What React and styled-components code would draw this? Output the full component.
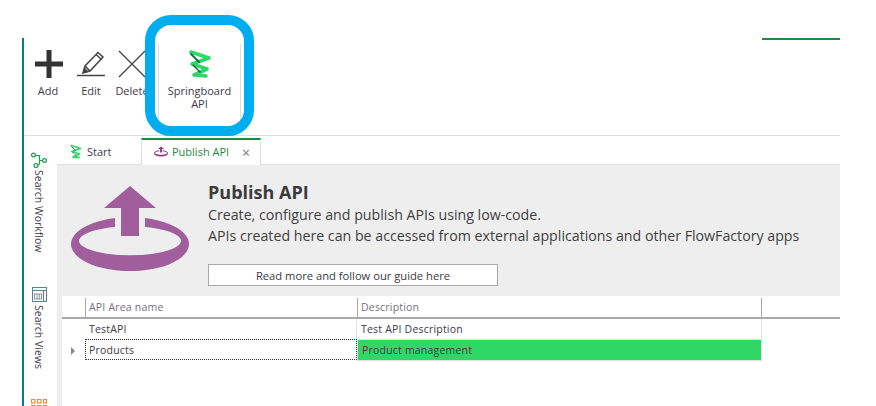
import styled, { createGlobalStyle } from "styled-components";

const GlobalStyle = createGlobalStyle`
  html, body { margin: 0; padding: 0; background: #fff; overflow: hidden; }
  body { font-family: "Open Sans", "Noto Sans", sans-serif; color: #3b3b3b; }
`;

const SpringIcon = ({ size = 24 }) => (
  <svg width={size} height={size * 1.25} viewBox="0 0 24 30" fill="none" strokeLinecap="round" strokeLinejoin="round">
    <path d="M3 3 L21 9 L4 15 L19 20 L6 26 L18 27" stroke="#2fd866" strokeWidth="3.6" />
    <path d="M3 5 L11 13" stroke="#136b37" strokeWidth="1.800" />
    <path d="M5 16 L12 23" stroke="#136b37" strokeWidth="1.400" />
  </svg>
);

const PublishIcon = ({ width = 118, height = 85, color = "#a05f9c" }) => (
  <svg width={width} height={height} viewBox="0 0 118 85">
    <path fill={color} d="M59 0 L85 22 L68 22 L68 50 L50 50 L50 22 L33 22 Z" />
    <path fill={color} d="M44 32 A59 27 0 1 0 74 32 L74 41 A51 14.500 0 1 1 44 41 Z" />
  </svg>
);

const AddIcon = () => (
  <svg width="30" height="30" viewBox="-1 0 30 30">
    <path d="M12.500 1h5v11.500H29v5H17.500V29h-5V17.500H1v-5h11.500z" fill="#333" />
  </svg>
);

const EditIcon = () => (
  <svg width="30" height="30" viewBox="0 0 30 30" fill="none" stroke="#444">
    <path d="M1 26.500h28" strokeWidth="1.500" />
    <path d="M7 24 L9 17 L22 3.500 L27 8 L14 22 Z M9 17 L14 22 M20 5.500 L25 10" strokeWidth="1.500" />
    <path d="M7 24 L8.500 19 L12 22.500 Z" fill="#444" />
  </svg>
);

const DeleteIcon = () => (
  <svg width="30" height="30" viewBox="0 0 30 30" stroke="#444" strokeWidth="1.300">
    <path d="M2 2 L28 28 M28 2 L2 28" />
  </svg>
);

const WorkflowIcon = () => (
  <svg width="16" height="16" viewBox="0 0 16 16" fill="none" stroke="#1f9a4a" strokeWidth="1.200">
    <circle cx="2.500" cy="3" r="1.900" />
    <circle cx="13.500" cy="8.500" r="1.900" />
    <circle cx="5" cy="13.500" r="1.900" />
    <path d="M4.400 3.500 L8.500 3.500 L8.500 8.500 L11.600 8.500 M8.500 8.500 L8.500 12 L6.800 13" />
  </svg>
);

const ViewsIcon = () => (
  <svg width="15" height="15" viewBox="0 0 15 15" fill="none" stroke="#5c8196">
    <rect x=".5" y=".5" width="14" height="14" />
    <path d="M.5 3.500h14M11.500 3.500v11" />
    <rect x="2.500" y="7" width="7" height="5" strokeWidth=".8" />
    <path d="M5 7v5M7.300 7v5" strokeWidth=".8" />
  </svg>
);

const GridIcon = () => (
  <svg width="16" height="16" viewBox="0 0 16 16" fill="none" stroke="#f08c1a" strokeWidth="1.100">
    <rect x=".5" y=".5" width="3.500" height="3.500" />
    <rect x="6.500" y=".5" width="3.500" height="3.500" />
    <rect x="12.500" y=".5" width="3" height="3.500" />
    <rect x=".5" y="6.500" width="3.500" height="3.500" />
    <rect x="6.500" y="6.500" width="3.500" height="3.500" />
    <rect x="12.500" y="6.500" width="3" height="3.500" />
  </svg>
);

const Page = styled.div`
  position: relative;
  width: 876px;
  height: 406px;
  padding: 38px 36px 0 22px;
  box-sizing: border-box;
  overflow: hidden;
`;

const Frame = styled.div`
  position: relative;
  height: 100%;
  border-left: 2px solid #0a7a94;
  display: flex;
  flex-direction: column;
`;

const TopLine = styled.div`
  position: absolute;
  top: 0;
  right: 0;
  width: 78px;
  height: 2px;
  background: #1d8a42;
`;

const Ribbon = styled.div`
  height: 98px;
  flex: none;
  display: flex;
  padding-top: 6px;
  box-sizing: border-box;
  border-bottom: 1px solid #dedede;
`;

const RibbonButton = styled.div`
  width: ${(p) => p.$width}px;
  height: 81px;
  flex: none;
  margin-right: ${(p) => p.$after || 0}px;
  display: flex;
  flex-direction: column;
  align-items: center;
  padding-top: 5px;
  box-sizing: border-box;
  font-size: 11px;
  line-height: 13px;
  text-align: center;
  color: #3d3a45;
  border-left: ${(p) => (p.$divided ? "1px solid #dcdcdc" : "none")};
  border-right: ${(p) => (p.$divided ? "1px solid #dcdcdc" : "none")};
`;

const RibbonIcon = styled.div`
  height: 30px;
  display: flex;
  align-items: center;
  margin-bottom: 5px;
`;

const Main = styled.div`
  flex: 1;
  min-height: 0;
  display: flex;
`;

const Side = styled.div`
  width: 33px;
  flex: none;
  display: flex;
  flex-direction: column;
  align-items: center;
  padding: 16px 3px 0 0;
  box-sizing: border-box;
`;

const SideItem = styled.div`
  height: ${(p) => p.$height}px;
  flex: none;
  display: flex;
  flex-direction: column;
  align-items: center;
`;

const SideText = styled.span`
  writing-mode: vertical-rl;
  font-size: 10.500px;
  line-height: 14px;
  margin: ${(p) => p.$gap}px 1px 0 0;
  color: #3d3a45;
`;

const Content = styled.div`
  flex: 1;
  min-width: 0;
  display: flex;
  flex-direction: column;
`;

const Tabs = styled.div`
  height: 29px;
  flex: none;
  display: flex;
  align-items: flex-end;
  border-bottom: 1px solid #dedede;
  box-sizing: border-box;
`;

const StartTab = styled.div`
  width: 84px;
  height: 26px;
  display: flex;
  align-items: center;
  gap: 5px;
  padding-left: 13px;
  box-sizing: border-box;
  font-size: 11px;
  color: #3d3a45;
`;

const ActiveTab = styled.div`
  width: 120px;
  height: 27px;
  margin-bottom: -1px;
  display: flex;
  align-items: center;
  padding: 0 10px 2px 12px;
  box-sizing: border-box;
  background: #fff;
  border-top: 2px solid #1d8a42;
  border-left: 1px solid #dedede;
  border-right: 1px solid #dedede;
  font-size: 11px;
  color: #1d8a42;
`;

const TabLabel = styled.span`
  margin-left: 4px;
  flex: 1;
`;

const CloseMark = styled.span`
  margin-top: 2px;
  font-size: 14px;
  color: #777;
  line-height: 1;
`;

const Panel = styled.div`
  flex: 1;
  min-height: 0;
  background: #eee;
  padding-left: 5px;
  display: flex;
  flex-direction: column;
`;

const Hero = styled.div`
  height: 131px;
  flex: none;
  display: flex;
  padding: 21px 0 0 9px;
  box-sizing: border-box;
`;

const HeroText = styled.div`
  margin-left: 19px;
  margin-top: -6px;
  display: flex;
  flex-direction: column;
`;

const HeroTitle = styled.h1`
  margin: 0;
  font-size: 18px;
  line-height: 24px;
  font-weight: 700;
  color: #3b3b3b;
`;

const HeroLine = styled.p`
  margin: 0;
  font-size: 14.200px;
  line-height: 21px;
  white-space: nowrap;
  color: #3f3f3f;
`;

const GuideButton = styled.button`
  margin-top: 18px;
  width: 290px;
  height: 22px;
  padding: 0;
  background: #fff;
  border: 1px solid #a9a9a9;
  font-family: inherit;
  font-size: 11.200px;
  color: #3d3a45;
`;

const Table = styled.div`
  flex: 1;
  background: #fff;
  font-size: 10.500px;
  letter-spacing: 0.2px;
  color: #3d3a45;
`;

const Row = styled.div`
  display: grid;
  grid-template-columns: 23px 272px 405px 1fr;
  height: ${(p) => p.$height}px;
`;

const HeadRow = styled(Row)`
  border-bottom: 2px solid #a9a9a9;
  box-sizing: border-box;
`;

const HeadCell = styled.div`
  margin-top: 2px;
  padding-left: 3px;
  line-height: 18px;
  color: #76717c;
  border-left: ${(p) => (p.$ruled ? "1px solid #a9a9a9" : "none")};
`;

const LastHeadCell = styled(HeadCell)`
  margin-left: -1px;
`;

const Selector = styled.div`
  display: flex;
  align-items: center;
  padding-left: 9px;
`;

const Arrow = styled.span`
  width: 0;
  height: 0;
  border-left: 4px solid #8a8a8a;
  border-top: 4px solid transparent;
  border-bottom: 4px solid transparent;
`;

const Cell = styled.div`
  padding-left: 4px;
  line-height: 20px;
  border-bottom: 1px solid #e0e0e0;
  border-right: 1px solid #e0e0e0;
  box-sizing: border-box;
`;

const FocusCell = styled(Cell)`
  margin-top: -1px;
  height: 21px;
  border: 1px dotted #333;
  padding-left: 3px;
  line-height: 21px;
`;

const GreenCell = styled(Cell)`
  background: #2fd866;
  border-left: 1px solid #e0e0e0;
`;

const Highlight = styled.div`
  position: absolute;
  left: 145px;
  top: 15px;
  width: 109px;
  height: 121px;
  box-sizing: border-box;
  border: 10px solid #00aeef;
  border-radius: 26px;
`;

const App = () => (
  <>
    <GlobalStyle />
    <Page>
      <Frame>
        <TopLine />
        <Ribbon>
          <RibbonButton $width={48}>
            <RibbonIcon><AddIcon /></RibbonIcon>
            Add
          </RibbonButton>
          <RibbonButton $width={38}>
            <RibbonIcon><EditIcon /></RibbonIcon>
            Edit
          </RibbonButton>
          <RibbonButton $width={44} $after={4}>
            <RibbonIcon><DeleteIcon /></RibbonIcon>
            Delete
          </RibbonButton>
          <RibbonButton $width={83} $divided>
            <RibbonIcon><SpringIcon /></RibbonIcon>
            Springboard
            <br />
            API
          </RibbonButton>
        </Ribbon>
        <Main>
          <Side>
            <SideItem $height={135}>
              <WorkflowIcon />
              <SideText $gap={2}>Search Workflow</SideText>
            </SideItem>
            <SideItem $height={112}>
              <ViewsIcon />
              <SideText $gap={3}>Search Views</SideText>
            </SideItem>
            <SideItem $height={16}>
              <GridIcon />
            </SideItem>
          </Side>
          <Content>
            <Tabs>
              <StartTab>
                <SpringIcon size={12} />
                Start
              </StartTab>
              <ActiveTab>
                <PublishIcon width={14} height={11} color="#8e3f8a" />
                <TabLabel>Publish API</TabLabel>
                <CloseMark>×</CloseMark>
              </ActiveTab>
            </Tabs>
            <Panel>
              <Hero>
                <PublishIcon />
                <HeroText>
                  <HeroTitle>Publish API</HeroTitle>
                  <HeroLine>Create, configure and publish APIs using low-code.</HeroLine>
                  <HeroLine>APIs created here can be accessed from external applications and other FlowFactory apps</HeroLine>
                  <GuideButton>Read more and follow our guide here</GuideButton>
                </HeroText>
              </Hero>
              <Table>
                <HeadRow $height={23}>
                  <HeadCell />
                  <HeadCell $ruled>API Area name</HeadCell>
                  <HeadCell $ruled>Description</HeadCell>
                  <LastHeadCell $ruled />
                </HeadRow>
                <Row $height={21}>
                  <Selector />
                  <Cell>TestAPI</Cell>
                  <Cell>Test API Description</Cell>
                </Row>
                <Row $height={21}>
                  <Selector><Arrow /></Selector>
                  <FocusCell>Products</FocusCell>
                  <GreenCell>Product management</GreenCell>
                </Row>
              </Table>
            </Panel>
          </Content>
        </Main>
      </Frame>
      <Highlight />
    </Page>
  </>
);

export default App;
